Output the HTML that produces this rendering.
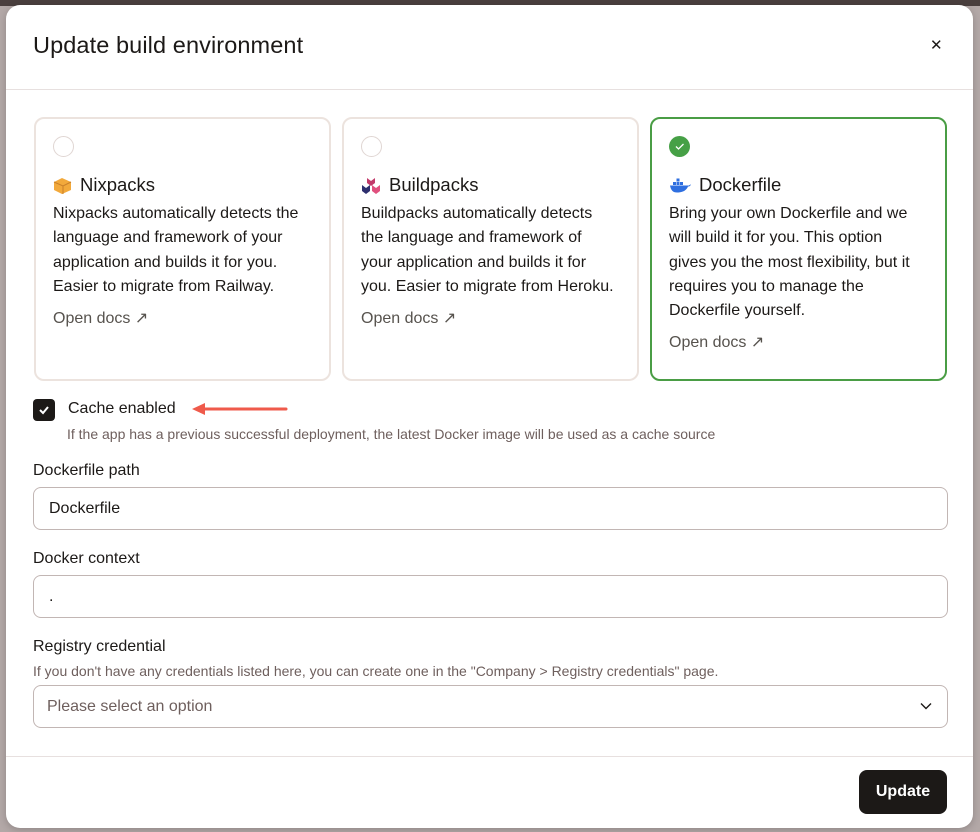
<!DOCTYPE html>
<html><head><style>
*{box-sizing:border-box;margin:0;padding:0}
body{width:980px;height:832px;background:#b3a8a7;font-family:"Liberation Sans",sans-serif;color:#1c1917;position:relative;overflow:hidden}
.topbar{position:absolute;left:0;top:0;width:980px;height:6px;background:#4a3f3e}
.modal{position:absolute;left:6px;top:5px;width:967px;height:823px;background:#fff;border-radius:14px;box-shadow:0 2px 8px rgba(0,0,0,.2)}
h1{position:absolute;left:27px;top:27px;font-size:23.5px;font-weight:500;letter-spacing:.1px}
.x{position:absolute;left:924px;top:33px;font-size:15px;line-height:15px}
.hr{position:absolute;left:0;width:967px;height:1px;background:#e7e0df}
.card{position:absolute;top:112px;width:297px;height:264px;border:2px solid #ece3de;border-radius:10px;padding:0 16px}
.card.sel{border-color:#4a9d45}
.radio{position:absolute;left:17px;top:17px;width:21px;height:21px;border:1px solid #e0d6d3;border-radius:50%}
.sel .radio{background:#46a046;border:none}
.ct{position:absolute;left:17px;top:55px;font-size:18.5px;font-weight:500;display:flex;align-items:center;gap:8px}
.cd{position:absolute;left:17px;top:83px;width:270px;font-size:16px;line-height:24.3px;color:#1c1917;white-space:nowrap}
.od{margin-top:8px;color:#57534e}
.lbl{position:absolute;left:27px;font-size:16px;font-weight:500}
.inp{position:absolute;left:27px;width:915px;height:43px;border:1px solid #c2b6b4;border-radius:8px;font-size:16px;padding:0 15px;line-height:41px}
.help{position:absolute;left:27px;font-size:14px;color:#6e5f5d}
.btn{position:absolute;left:853px;top:765px;width:88px;height:44px;background:#1c1917;color:#fff;border-radius:8px;font-size:16px;font-weight:700;text-align:center;line-height:44px}
</style></head><body>
<div class="topbar"></div>
<div class="modal">
<h1>Update build environment</h1>
<div class="x">✕</div>
<div class="hr" style="top:84px"></div>

<div class="card" style="left:28px"><div class="radio"></div>
<div class="ct"><svg width="19" height="17" viewBox="0 0 19 17"><path d="M1 5l8-4 9 4v8l-9 4-8-4z" fill="#f2a93b"/><path d="M1 5l9 4 8-4" fill="none" stroke="#c9802a"/><path d="M10 9v8" stroke="#c9802a"/></svg>Nixpacks</div>
<div class="cd">Nixpacks automatically detects the<br>language and framework of your<br>application and builds it for you.<br>Easier to migrate from Railway.<div class="od">Open docs ↗</div></div></div>

<div class="card" style="left:336px"><div class="radio"></div>
<div class="ct"><svg width="20" height="17" viewBox="0 0 20 17"><path d="M6 1l4 3 4-3v5l-4 3-4-3z" fill="#c23a6a"/><path d="M1 8l4 3 4-3v6l-4 3-4-3z" fill="#2d2f6e"/><path d="M11 8l4 3 4-3v6l-4 3-4-3z" fill="#e0507e"/></svg>Buildpacks</div>
<div class="cd">Buildpacks automatically detects<br>the language and framework of<br>your application and builds it for<br>you. Easier to migrate from Heroku.<div class="od">Open docs ↗</div></div></div>

<div class="card sel" style="left:644px"><div class="radio"><svg width="21" height="21" viewBox="0 0 21 21"><path d="M7 10.5l2.5 2.5 5-5" fill="none" stroke="#fff" stroke-width="1.3"/></svg></div>
<div class="ct"><svg width="22" height="15" viewBox="0 0 22 15"><rect x="4" y="4" width="3" height="3" fill="#2f6fe0"/><rect x="7.5" y="4" width="3" height="3" fill="#2f6fe0"/><rect x="11" y="4" width="3" height="3" fill="#2f6fe0"/><rect x="7.5" y="0.5" width="3" height="3" fill="#2f6fe0"/><path d="M1 7.5h19c1-1 2-1 2-1-1 2-2 2-3 2-2 5-7 6-11 6-4 0-6-2-7-7z" fill="#2f6fe0"/></svg>Dockerfile</div>
<div class="cd">Bring your own Dockerfile and we<br>will build it for you. This option<br>gives you the most flexibility, but it<br>requires you to manage the<br>Dockerfile yourself.<div class="od">Open docs ↗</div></div></div>

<div style="position:absolute;left:27px;top:394px;width:22px;height:22px;background:#1c1917;border-radius:4px"><svg width="22" height="22" viewBox="0 0 22 22"><path d="M7 11l3 3 5-6" fill="none" stroke="#fff" stroke-width="2"/></svg></div>
<div style="position:absolute;left:62px;top:395px;font-size:16px">Cache enabled</div>
<svg style="position:absolute;left:184px;top:397px" width="100" height="14" viewBox="0 0 100 14"><path d="M12 7H96" stroke="#ef5a4b" stroke-width="3" stroke-linecap="round"/><path d="M2 7l13-6v12z" fill="#ef5a4b"/></svg>
<div class="help" style="top:421px;left:61px">If the app has a previous successful deployment, the latest Docker image will be used as a cache source</div>

<div class="lbl" style="top:457px">Dockerfile path</div>
<div class="inp" style="top:482px">Dockerfile</div>
<div class="lbl" style="top:545px">Docker context</div>
<div class="inp" style="top:570px">.</div>
<div class="lbl" style="top:633px">Registry credential</div>
<div class="help" style="top:658px">If you don't have any credentials listed here, you can create one in the "Company &gt; Registry credentials" page.</div>
<div class="inp" style="top:680px;color:#6e5f5d;padding-left:13px">Please select an option<svg style="position:absolute;right:15px;top:16px" width="12" height="8" viewBox="0 0 12 8"><path d="M1 1.5l5 5 5-5" fill="none" stroke="#1c1917" stroke-width="1.4"/></svg></div>

<div class="hr" style="top:751px"></div>
<div class="btn">Update</div>
</div>
</body></html>
